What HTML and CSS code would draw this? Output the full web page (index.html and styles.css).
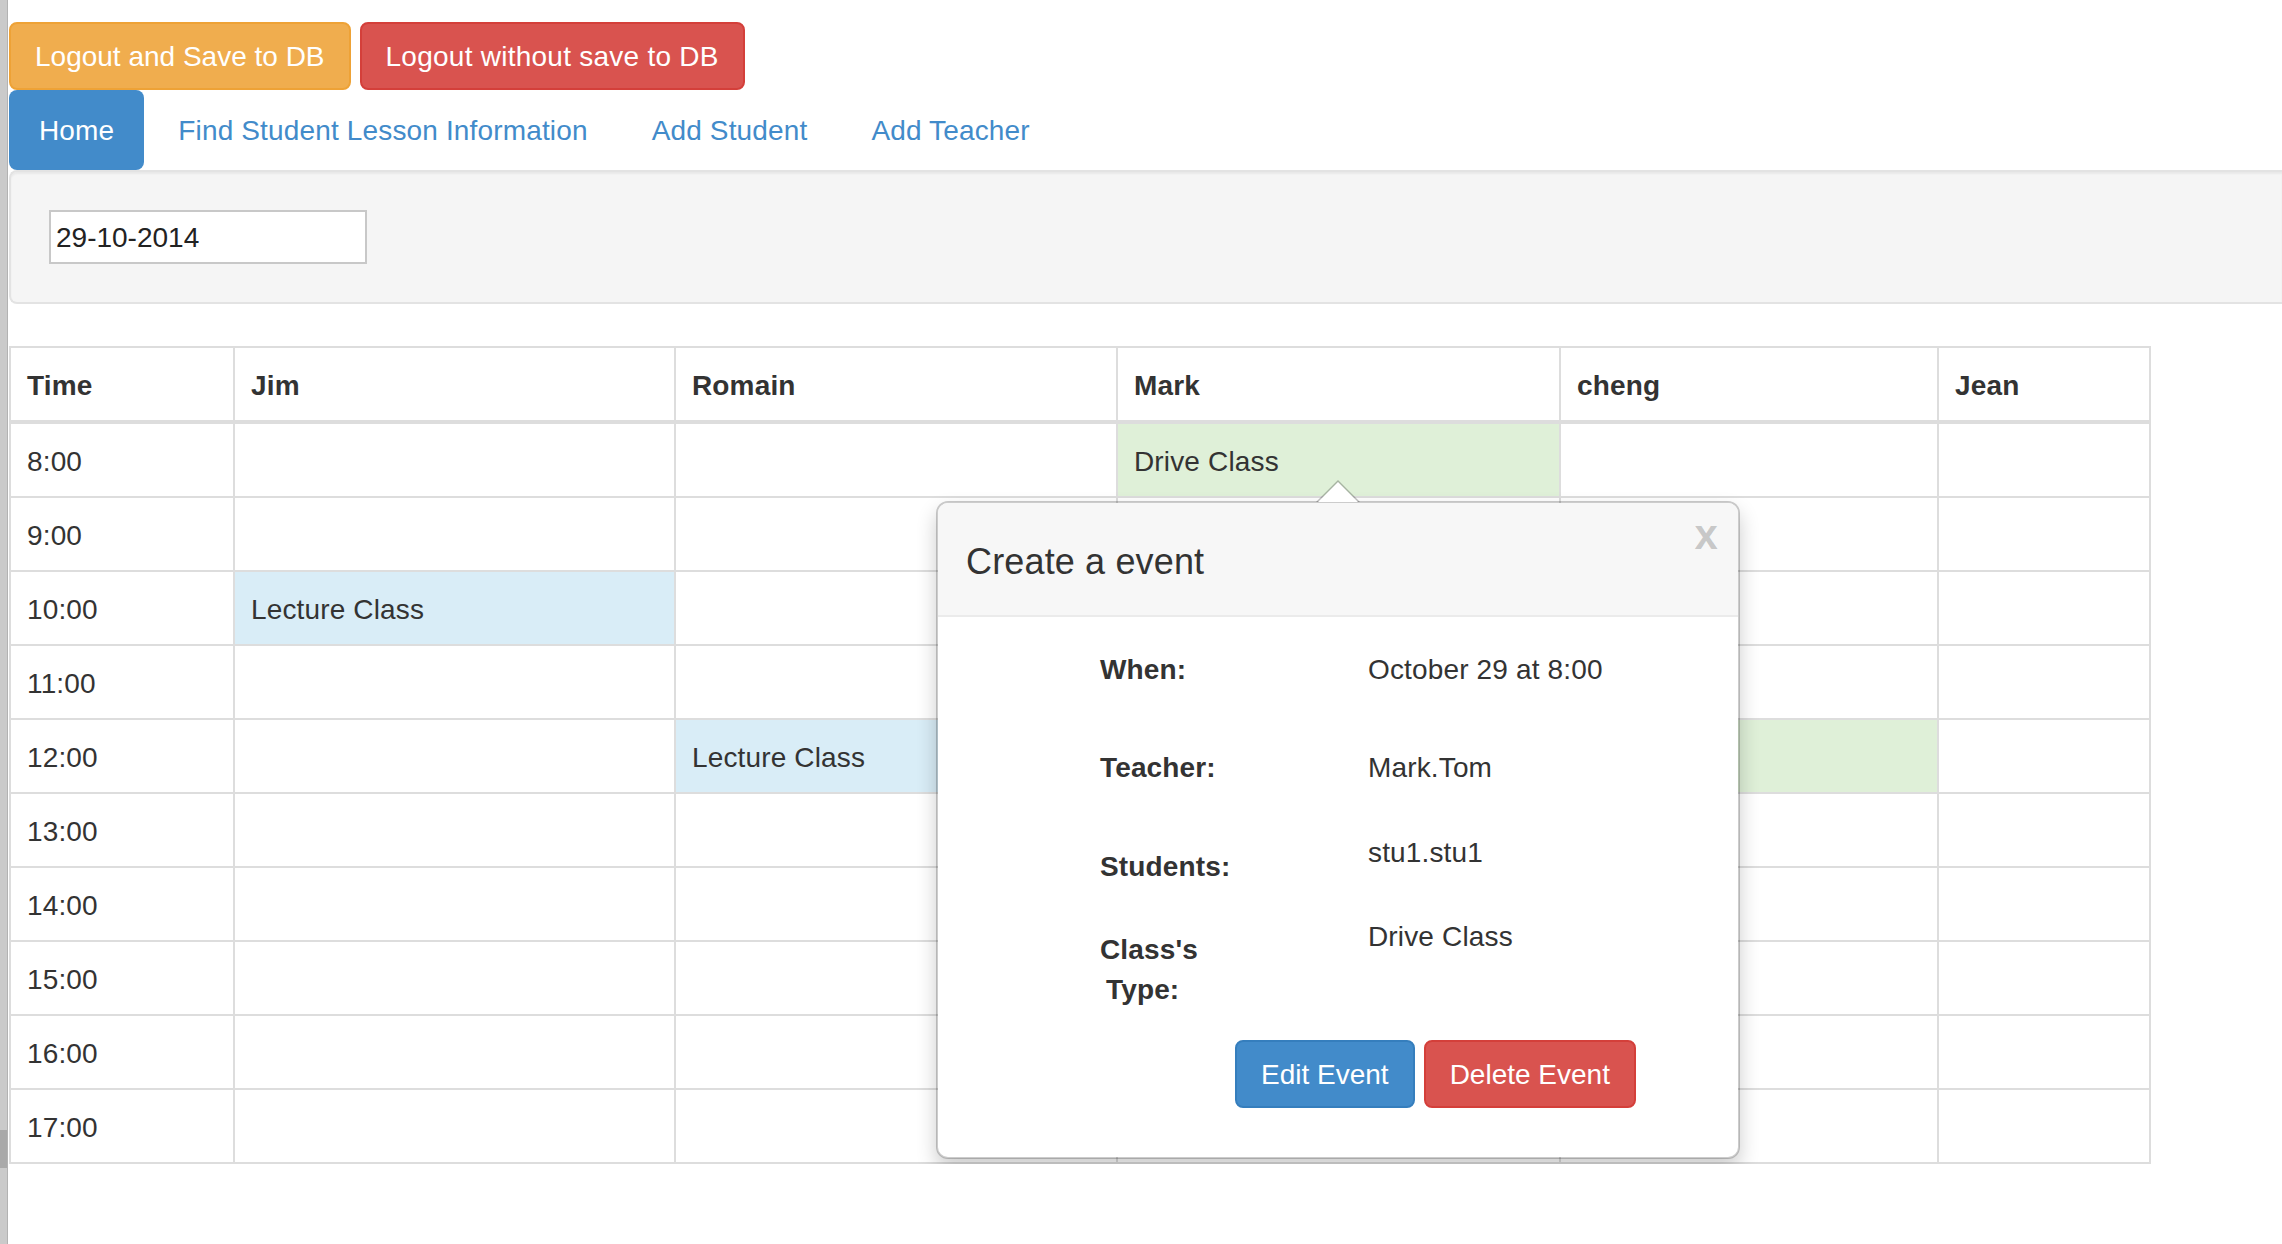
FILE: index.html
```html
<!DOCTYPE html>
<html lang="en">
<head>
<meta charset="utf-8">
<title>Schedule</title>
<link rel="stylesheet" href="styles.css">
</head>
<body>
<div class="topbar">
  <button class="btn btn-warning">Logout and Save to DB</button>
  <button class="btn btn-danger btn-spaced">Logout without save to DB</button>
</div>
<ul class="nav">
  <li class="active"><a href="#">Home</a></li>
  <li><a href="#">Find Student Lesson Information</a></li>
  <li><a href="#">Add Student</a></li>
  <li><a href="#">Add Teacher</a></li>
</ul>
<div class="well">
  <input class="date-input" type="text" value="29-10-2014">
</div>
<div class="table-wrap">
  <table class="schedule">
    <colgroup>
      <col class="c-time"><col class="c-jim"><col class="c-romain"><col class="c-mark"><col class="c-cheng"><col class="c-jean">
    </colgroup>
    <thead>
      <tr><th>Time</th><th>Jim</th><th>Romain</th><th>Mark</th><th>cheng</th><th>Jean</th></tr>
    </thead>
    <tbody>
      <tr><td>8:00</td><td></td><td></td><td class="success">Drive Class</td><td></td><td></td></tr>
      <tr><td>9:00</td><td></td><td></td><td></td><td></td><td></td></tr>
      <tr><td>10:00</td><td class="info">Lecture Class</td><td></td><td></td><td></td><td></td></tr>
      <tr><td>11:00</td><td></td><td></td><td></td><td></td><td></td></tr>
      <tr><td>12:00</td><td></td><td class="info">Lecture Class</td><td></td><td class="success">Drive Class</td><td></td></tr>
      <tr><td>13:00</td><td></td><td></td><td></td><td></td><td></td></tr>
      <tr><td>14:00</td><td></td><td></td><td></td><td></td><td></td></tr>
      <tr><td>15:00</td><td></td><td></td><td></td><td></td><td></td></tr>
      <tr><td>16:00</td><td></td><td></td><td></td><td></td><td></td></tr>
      <tr><td>17:00</td><td></td><td></td><td></td><td></td><td></td></tr>
    </tbody>
  </table>

  <div class="popover">
    <div class="pop-arrow"></div>
    <h3 class="pop-title">Create a event</h3>
    <span class="pop-close">x</span>
    <div class="pop-body">
      <div class="field f-when">
        <div class="lbl">When:</div>
        <div class="val">October 29 at 8:00</div>
      </div>
      <div class="field f-teacher">
        <div class="lbl">Teacher:</div>
        <div class="val">Mark.Tom</div>
      </div>
      <div class="field f-students">
        <div class="lbl">Students:</div>
        <div class="val">stu1.stu1</div>
      </div>
      <div class="field f-type">
        <div class="lbl">Class's Type:</div>
        <div class="val">Drive Class</div>
      </div>
      <div class="actions">
        <button class="btn btn-primary">Edit Event</button>
        <button class="btn btn-danger">Delete Event</button>
      </div>
    </div>
  </div>
</div>
</body>
</html>
```

FILE: styles.css
```css
html {
  min-height: 100%;
  background:
    linear-gradient(#a9a9a9, #a9a9a9) 0 1130px / 7px 38px no-repeat,
    linear-gradient(to right, #cacaca 0, #cacaca 7px, #b2b2b2 7px, #b2b2b2 8px, #ffffff 8px);
}

body {
  margin: 0 0 0 8px;
  padding: 0 0 0 1px;
  font-family: "Liberation Sans", Arial, sans-serif;
  font-size: 28px;
  line-height: 40px;
  letter-spacing: 0.15px;
  color: #333333;
}

/* buttons */
.btn {
  font-family: "Liberation Sans", Arial, sans-serif;
  font-size: 28px;
  line-height: 40px;
  letter-spacing: 0;
  padding: 13px 24px 11px;
  border: 2px solid transparent;
  border-radius: 8px;
  color: #ffffff;
  cursor: pointer;
}
.btn-spaced { letter-spacing: 0.25px; }
.btn-warning { background: #f0ad4e; border-color: #eea236; }
.btn-danger { background: #d9534f; border-color: #d43f3a; }
.btn-primary { background: #428bca; border-color: #357ebd; }

.topbar {
  display: flex;
  gap: 9px;
  padding-top: 22px;
  height: 68px;
}

/* nav pills */
.nav {
  display: flex;
  gap: 4px;
  list-style: none;
  margin: 0;
  padding: 0;
}
.nav a {
  display: block;
  padding: 21px 30px 19px;
  line-height: 40px;
  border-radius: 8px;
  color: #428bca;
  text-decoration: none;
}
.nav .active a {
  background: #428bca;
  color: #ffffff;
}

/* well */
.well {
  margin: 0 0 42px;
  padding: 38px;
  background: #f5f5f5;
  border: 2px solid #e3e3e3;
  border-right: 0;
  border-radius: 8px 0 0 8px;
  box-shadow: inset 0 2px 2px rgba(0, 0, 0, 0.05);
}
.date-input {
  display: block;
  box-sizing: border-box;
  width: 318px;
  height: 54px;
  margin: 0;
  padding: 2px 5px 0;
  border: 2px solid #c8c8c8;
  background: #ffffff;
  font-family: "Liberation Sans", Arial, sans-serif;
  font-size: 28px;
  color: #222222;
}

/* schedule table */
.table-wrap {
  position: relative;
}
.schedule {
  border-collapse: collapse;
  table-layout: fixed;
  width: 2140px;
}
.c-time { width: 224px; }
.c-jim { width: 441px; }
.c-romain { width: 442px; }
.c-mark { width: 443px; }
.c-cheng { width: 378px; }
.c-jean { width: 212px; }

.schedule th,
.schedule td {
  border: 2px solid #dddddd;
  padding: 18px 16px 14px;
  line-height: 40px;
  text-align: left;
  vertical-align: top;
  white-space: nowrap;
  overflow: hidden;
}
.schedule thead th {
  border-bottom-width: 4px;
  font-weight: bold;
}
.schedule .info { background: #d9edf7; }
.schedule .success { background: #dff0d8; }

/* popover */
.popover {
  position: absolute;
  left: 927px;
  top: 155px;
  width: 804px;
  box-sizing: border-box;
  background: #ffffff;
  background-clip: padding-box;
  border: 2px solid rgba(0, 0, 0, 0.2);
  border-radius: 12px;
  box-shadow: 0 10px 20px rgba(0, 0, 0, 0.2);
}
.pop-arrow {
  position: absolute;
  top: -23px;
  left: 50%;
  margin-left: -22px;
  width: 0;
  height: 0;
  border-style: solid;
  border-width: 0 22px 22px;
  border-color: transparent transparent rgba(0, 0, 0, 0.25);
}
.pop-arrow::after {
  content: "";
  position: absolute;
  top: 2px;
  left: -20px;
  width: 0;
  height: 0;
  border-style: solid;
  border-width: 0 20px 20px;
  border-color: transparent transparent #ffffff;
}
.pop-title {
  margin: 0;
  padding: 39px 28px 33px;
  font-size: 36px;
  line-height: 40px;
  font-weight: normal;
  color: #333333;
  background: #f7f7f7;
  border-bottom: 2px solid #ebebeb;
  border-radius: 10px 10px 0 0;
}
.pop-close {
  position: absolute;
  top: 11px;
  right: 20px;
  font-size: 42px;
  line-height: 42px;
  font-weight: bold;
  color: rgba(0, 0, 0, 0.2);
}
.pop-body {
  padding: 33px 0 49px;
}
.field {
  display: grid;
  grid-template-columns: 268px 1fr;
  align-items: start;
  padding-left: 162px;
  line-height: 40px;
}
.lbl {
  width: 150px;
  font-weight: bold;
}
.f-teacher { margin-top: 58px; }
.f-students { margin-top: 45px; }
.f-students .lbl { padding-top: 14px; }
.f-type { margin-top: 30px; }
.f-type .lbl {
  padding-top: 13px;
  padding-left: 6px;
  width: 144px;
  text-indent: -6px;
}
.actions {
  display: flex;
  gap: 9px;
  margin-top: 30px;
  padding-left: 297px;
}
```
